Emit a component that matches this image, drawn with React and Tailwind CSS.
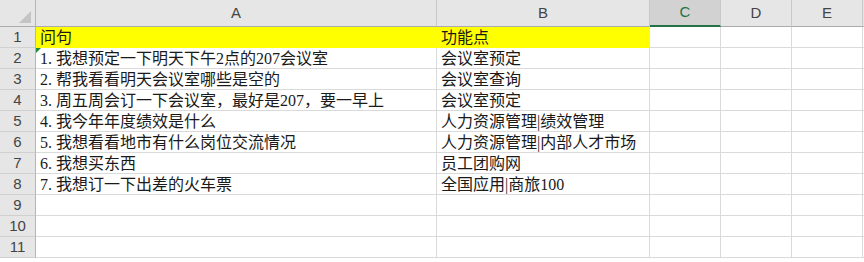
import React from 'react';

const cols = ['A', 'B', 'C', 'D', 'E'];

const rows = [
  ['问句', '功能点'],
  ['1. 我想预定一下明天下午2点的207会议室', '会议室预定'],
  ['2. 帮我看看明天会议室哪些是空的', '会议室查询'],
  ['3. 周五周会订一下会议室，最好是207，要一早上', '会议室预定'],
  ['4. 我今年年度绩效是什么', '人力资源管理|绩效管理'],
  ['5. 我想看看地市有什么岗位交流情况', '人力资源管理|内部人才市场'],
  ['6. 我想买东西', '员工团购网'],
  ['7. 我想订一下出差的火车票', '全国应用|商旅100'],
  [],
  [],
  [],
];

const HeaderCell = ({ label }) => {
  const selected = label === 'C';
  return (
    <div
      className={`h-[27px] flex items-center justify-center border-r border-[#c9c9c9] text-[15px] font-['Liberation_Sans',sans-serif] ${
        selected
          ? 'bg-[#d2d2d2] text-[#217346] border-b-2 border-b-[#217346]'
          : 'bg-[#e6e6e6] text-[#444] border-b border-b-[#ababab]'
      }`}
    >
      {label}
    </div>
  );
};

const Cell = ({ text, yellow, first }) => (
  <div
    className={`relative h-[21px] flex items-center pl-[4px] pt-[1px] whitespace-nowrap overflow-visible text-[16px] leading-none text-[#1a1a1a] font-['Liberation_Serif','Noto_Sans_CJK_SC',serif] border-b border-r ${
      yellow ? 'bg-[#ffff00] border-[#ffff00]' : 'bg-white border-[#dadada]'
    }`}
  >
    {first && (
      <span className="absolute left-0 top-0 w-0 h-0 border-t-[5px] border-r-[5px] border-t-[#1e8a3c] border-r-transparent" />
    )}
    {text}
  </div>
);

export default function App() {
  return (
    <div className="w-[864px] h-[262px] bg-white overflow-hidden">
      <div className="grid grid-cols-[36px_401px_213px_71px_71px_71px_1fr]">
        {/* corner */}
        <div className="relative h-[27px] bg-[#e6e6e6] border-r border-r-[#b5b5b5] border-b border-b-[#ababab]">
          <svg className="absolute left-[19px] top-[11px]" width="12" height="12" viewBox="0 0 12 12">
            <polygon points="12,0 12,12 0,12" fill="#c4c4c4" />
          </svg>
        </div>
        {cols.map((c) => (
          <HeaderCell key={c} label={c} />
        ))}
        <div className="h-[27px] bg-[#e6e6e6] border-b border-b-[#ababab]" />

        {rows.map((r, i) => (
          <React.Fragment key={i}>
            <div className="h-[21px] flex items-center justify-center bg-[#e6e6e6] border-r border-r-[#b5b5b5] border-b border-b-[#d0d0d0] text-[15px] text-[#444] font-['Liberation_Sans',sans-serif]">
              {i + 1}
            </div>
            <Cell text={r[0]} yellow={i === 0} first={i === 1} />
            <Cell text={r[1]} yellow={i === 0} />
            <Cell text="" />
            <Cell text="" />
            <Cell text="" />
            <div className="h-[21px] bg-white border-b border-[#dadada]" />
          </React.Fragment>
        ))}
      </div>
    </div>
  );
}
